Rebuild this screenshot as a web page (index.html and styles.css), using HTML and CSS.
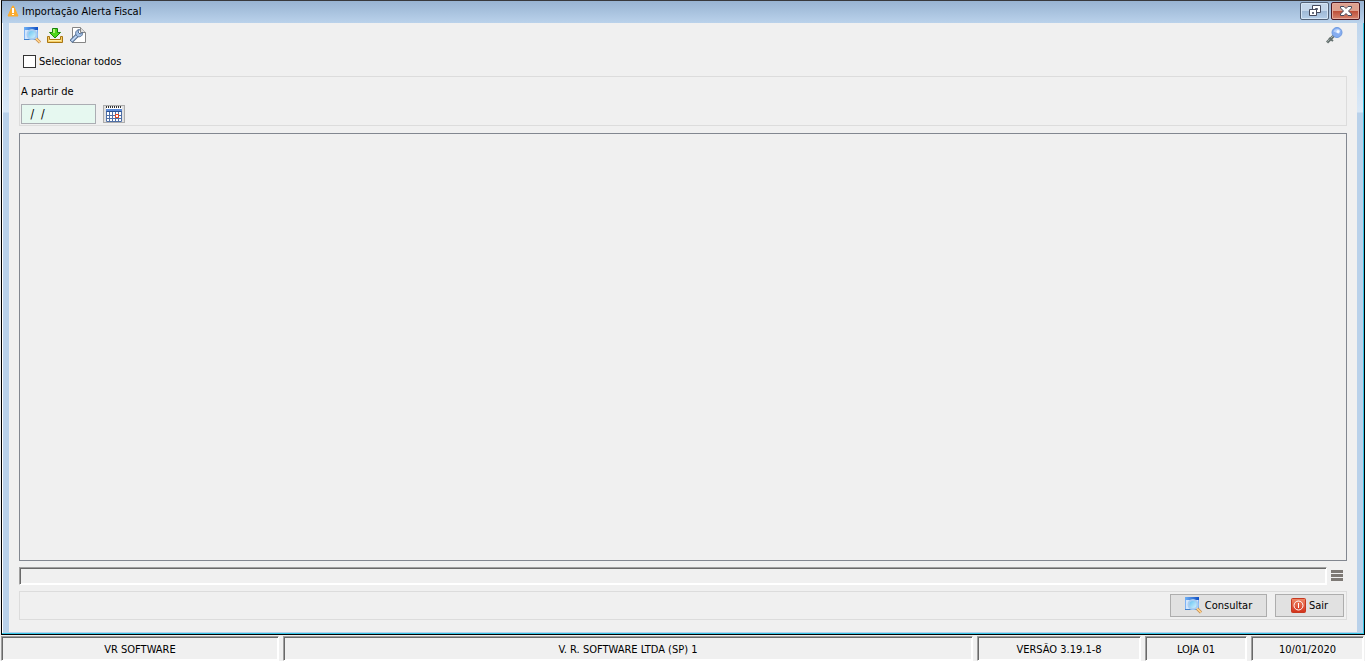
FILE: index.html
```html
<!DOCTYPE html>
<html lang="pt-BR">

	<head>
		<meta charset="UTF-8">
		<title>Importação Alerta Fiscal</title>
		<link rel="stylesheet" href="styles.css">
	</head>

	<body>

		<svg class="defs" aria-hidden="true">
			<defs>
				<linearGradient id="glass" x1="0" y1="0" x2="1" y2="1">
					<stop offset="0" stop-color="#58bdf0" />
					<stop offset="1" stop-color="#e2f8ff" />
				</linearGradient>
				<linearGradient id="bar" x1="0" y1="0" x2="1" y2="0">
					<stop offset="0" stop-color="#6fb0f5" />
					<stop offset="1" stop-color="#0f4fc4" />
				</linearGradient>
				<linearGradient id="red" x1="0" y1="0" x2="0" y2="1">
					<stop offset="0" stop-color="#f08a68" />
					<stop offset="1" stop-color="#d2301a" />
				</linearGradient>
				<symbol id="search" viewBox="0 0 17 17">
					<path fill="#d3e6fc" d="M0 1h14v12H0z" />
					<path fill="url(#bar)" d="M0 0h14v3H0z" />
					<path fill="#7db2f5" d="M0 3h1v9H0zM13 3h1v9h-1z" />
					<path fill="#3f7fcb" d="M0 12h14v1H0z" />
					<path stroke="#a76b2c" stroke-width="3" d="M12 11.500l4 4" />
					<path stroke="#ffd08a" stroke-width="2" d="M12 11.500l4 4" />
					<circle cx="8" cy="7.500" r="4.500" fill="url(#glass)" stroke="#a9cdf0" stroke-width="2" />
				</symbol>
			</defs>
		</svg>

		<main class="window">
			<header class="titlebar">
				<svg class="warn" viewBox="0 0 12 12">
					<path fill="#fbab2e" stroke="#fbab2e" stroke-linejoin="round" d="M5.500 1h1L11 11H1z" />
					<path fill="#fff" d="M5 3h2v5H5zM5 9h2v1H5z" />
				</svg>
				<h1>Importação Alerta Fiscal</h1>
				<button class="winbtn" type="button" aria-label="Restaurar">
					<svg width="14" height="12" viewBox="0 0 14 12">
						<path fill="#fff" fill-rule="evenodd" stroke="#454a5d" d="M4.500 .5h8v7h-8zM7.500 3.500h2v1h-2z" />
						<path fill="#fff" fill-rule="evenodd" stroke="#454a5d" d="M1.500 4.500h7v6h-7zM4.500 7.500h1v1h-1z" />
					</svg>
				</button>
				<button class="winbtn close" type="button" aria-label="Fechar">
					<svg width="12" height="10" viewBox="0 0 12 10">
						<path fill="#fff" stroke="#454a5d" d="M.5 .5h3.500L6 2.500 8 .5h3.500v1.500L8.500 5l3 3v1.500H8L6 7.500l-2 2H.5V8l3-3-3-3z" />
					</svg>
				</button>
			</header>

			<div class="content">
				<div class="toolbar">
					<button class="tool" type="button" aria-label="Consultar">
						<svg width="17" height="17"><use href="#search" /></svg>
					</button>
					<button class="tool" type="button" aria-label="Importar">
						<svg width="17" height="17" viewBox="0 0 17 17">
							<path fill="#f7cf68" stroke="#a97612" d="M.5 9.500h2v3h11v-3h2v6H.5z" />
							<path fill="#fff0ac" d="M2 13h12v1H2z" />
							<path fill="#4fd51f" stroke="#18820c" stroke-linejoin="round" d="M5.500 1.500h5v4h3L8 11 2.500 5.500h3z" />
							<path fill="#b0f675" d="M6 2h2v4H6z" />
						</svg>
					</button>
					<button class="tool" type="button" aria-label="Configurar">
						<svg width="17" height="17" viewBox="0 0 17 17">
							<path fill="#fff" stroke="#858585" d="M2.500 .5h8l5 5v10h-13z" />
							<path fill="#ddd" stroke="#858585" d="M10.500 .5v5h5" />
							<path fill="none" stroke="#526d91" stroke-width="4" d="M1 14.500l6-6" />
							<path fill="none" stroke="#bed5f3" stroke-width="2" d="M1.500 14l6.500-6.500" />
							<path fill="#a5c2e8" stroke="#526d91" d="M9.500 2.500L8 5l2 2L12.500 5.500c.5 3-2 5-5 4C4.500 7.500 5 3 9.500 2.500z" />
						</svg>
					</button>
					<button class="tool key" type="button" aria-label="Permissões">
						<svg width="17" height="17" viewBox="0 0 17 17">
							<path stroke="#65716f" stroke-width="3" d="M1 15.500L8 8.500" />
							<path stroke="#a6b1ae" d="M1.500 14.500L8 8" />
							<path stroke="#65716f" stroke-width="2" d="M3 11l4 3" />
							<circle cx="11" cy="5.500" r="5" fill="#86adf0" stroke="#6d9ae0" />
							<path fill="#b7d1fb" d="M7.500 4.500a4 4 0 0 1 7-1L13 7z" />
							<circle cx="12" cy="4.500" r="1.500" fill="#f4f8ff" />
						</svg>
					</button>
				</div>

				<label class="check"><input type="checkbox">Selecionar todos</label>

				<section class="panel filter">
					<label for="data">A partir de</label>
					<div class="date">
						<input id="data" type="text" value=" /  /">
						<button class="calendar" type="button" aria-label="Calendário">
							<svg width="16" height="16" viewBox="0 0 16 16">
								<path fill="#fff" d="M0 1h16v15H0z" />
								<path stroke="#333" stroke-width="2" stroke-dasharray="1 1" d="M0 1h16" />
								<path fill="#5d8bd8" d="M0 3h16v2H0z" />
								<path fill="#2b5192" d="M0 5h16v1H0z" />
								<path fill="none" stroke="#4f6fa6" d="M.5 5.500v10h15v-10M3.500 6v9M6.500 6v9M9.500 6v9M12.500 6v9M0 9.500h16M0 12.500h16" />
								<path fill="#fff" stroke="#e8431d" d="M9.500 8.500h3v3h-3z" />
							</svg>
						</button>
					</div>
				</section>

				<section class="list"></section>

				<div class="progress">
					<div class="track"></div>
					<button class="menu" type="button" aria-label="Menu"></button>
				</div>

				<footer class="panel actions">
					<button class="btn" type="button"><svg width="17" height="17"><use href="#search" /></svg>Consultar</button>
					<button class="btn exit" type="button">
						<svg width="15" height="15" viewBox="0 0 15 15">
							<rect x=".5" y=".5" width="14" height="14" rx="1" fill="url(#red)" stroke="#c63820" />
							<circle cx="7.500" cy="7.500" r="4.500" fill="none" stroke="#fff" />
							<path stroke="#fff" d="M7.500 5v5" />
						</svg>
						Sair
					</button>
				</footer>
			</div>
		</main>

		<div class="status">
			<div class="cell company">VR SOFTWARE</div>
			<div class="cell store">V. R. SOFTWARE LTDA (SP) 1</div>
			<div class="cell version">VERSÃO 3.19.1-8</div>
			<div class="cell shop">LOJA 01</div>
			<div class="cell today">10/01/2020</div>
		</div>

	</body>

</html>
```
FILE: styles.css
```css
* {
	box-sizing: border-box;
}

body {
	margin: 0;
	height: 100vh;
	display: flex;
	flex-direction: column;
	overflow: hidden;
	background: #f0f0f0;
	color: #000;
	font: 11px/16px Tahoma, "DejaVu Sans Condensed", "Noto Sans", sans-serif;
}

button, input {
	font: inherit;
	color: inherit;
	margin: 0;
	padding: 0;
}

svg {
	display: block;
	flex: none;
}

.defs {
	position: absolute;
	width: 0;
	height: 0;
}

.window {
	flex: 1;
	min-height: 0;
	display: flex;
	flex-direction: column;
	margin-left: 1px;
	border: 1px solid #000;
	border-top-color: #38383c;
	box-shadow: inset -1px -1px #35c5e6, inset 1px 0 #fff;
	background: linear-gradient(#b9d1ea, #d9e8f7 111px, #b9d1ea 112px);
	padding: 0 7px 2px;
}

.titlebar {
	display: flex;
	align-items: flex-start;
	height: 22px;
	margin: 0 -7px;
	padding: 0 4px 0 5px;
	background: linear-gradient(#98b3d2, #bad2eb);
}

.titlebar h1 {
	flex: 1;
	margin: 3px 0 0;
	font-size: 11px;
	font-weight: normal;
}

.warn {
	width: 12px;
	height: 12px;
	margin: 4px 3px 0 0;
}

.winbtn {
	display: flex;
	align-items: center;
	justify-content: center;
	width: 29px;
	height: 18px;
	margin: 1px 0 0 2px;
	border: 1px solid #536176;
	border-radius: 2px;
	background: linear-gradient(#c3d5e9 50%, #9eb8d5 50%, #b5cee8);
	box-shadow: inset 0 0 0 1px #d5e5f5;
}

.winbtn.close {
	border-color: #4b1620;
	background: linear-gradient(#dda08f 50%, #bd4d37 50%, #d5846f);
	box-shadow: inset 0 0 0 1px #e4aa9c;
}

.content {
	flex: 1;
	min-height: 0;
	display: flex;
	flex-direction: column;
	padding: 4px 10px 12px;
	background: #f0f0f0;
}

.toolbar {
	display: flex;
	gap: 6px;
	padding: 0 4px 0 5px;
}

.tool {
	border: 0;
	background: none;
}

.key {
	margin-left: auto;
}

.check {
	display: flex;
	align-items: flex-start;
	gap: 3px;
	margin: 10px 4px 6px;
}

.check input {
	appearance: none;
	width: 13px;
	height: 13px;
	margin-top: 1px;
	border: 1px solid #333;
	background: #fff;
}

.panel {
	border: 1px solid #dcdcdc;
}

.filter {
	height: 50px;
	padding: 7px 1px 0;
}

.date {
	display: flex;
	gap: 7px;
	margin-top: 4px;
}

.date input {
	width: 75px;
	height: 20px;
	padding-left: 5px;
	border: 1px solid #abadb3;
	background: #e6f8f0;
	font-size: 12px;
	white-space: pre;
}

.calendar {
	display: flex;
	align-items: center;
	justify-content: center;
	width: 22px;
	height: 18px;
	margin-top: 1px;
	border: 1px solid #adadad;
	background: #e1e1e1;
}

.list {
	flex: 1;
	margin: 7px 0 6px;
	border: 1px solid #828790;
}

.progress {
	display: flex;
	align-items: flex-start;
	gap: 4px;
	padding-right: 4px;
}

/* sunken edge */
.track, .cell {
	border: 1px solid #fff;
	border-top-color: #a0a0a0;
	border-left-color: #a0a0a0;
	box-shadow: inset 1px 1px #696969, inset -1px -1px #fff;
}

.track {
	flex: 1;
	height: 18px;
}

.menu {
	width: 12px;
	height: 11px;
	margin-top: 3px;
	border: 0;
	background: repeating-linear-gradient(#7d7975 0 3px, #f0f0f0 3px 4px);
}

.actions {
	display: flex;
	justify-content: flex-end;
	gap: 8px;
	height: 29px;
	margin-top: 6px;
	padding: 2px;
}

.btn {
	display: flex;
	align-items: center;
	justify-content: center;
	gap: 3px;
	width: 97px;
	height: 23px;
	border: 1px solid #adadad;
	background: #e1e1e1;
}

.exit {
	width: 69px;
}

.status {
	display: flex;
	gap: 4px;
	height: 26px;
	padding: 1px 1px 0;
}

.cell {
	padding-top: 5px;
	text-align: center;
}

.company {
	width: 278px;
}

.store {
	flex: 1;
}

.version {
	width: 164px;
}

.shop {
	width: 102px;
}

.today {
	width: 113px;
}
```
